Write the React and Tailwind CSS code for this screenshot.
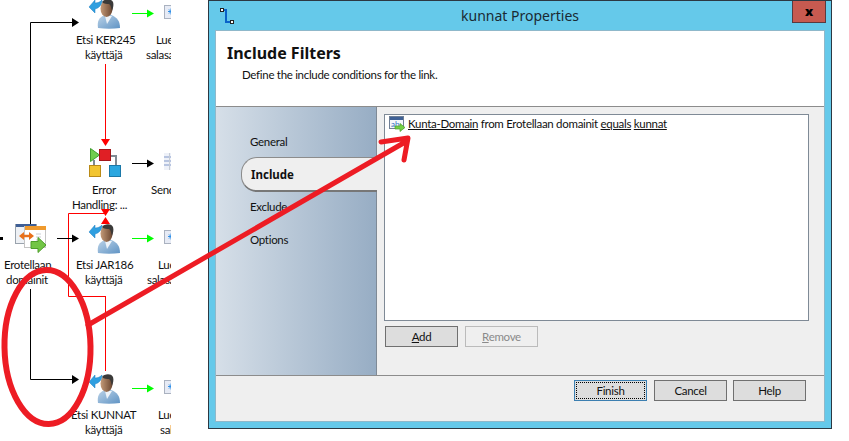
import React from "react";

// free canvas labels on the left (x, y = top of the line)
const labels = [
  { x: 76, y: 32, text: "Etsi KER245" },
  { x: 85, y: 47, text: "käyttäjä" },
  { x: 156, y: 32, text: "Lue" },
  { x: 146, y: 47, text: "salasana" },
  { x: 92, y: 182, text: "Error" },
  { x: 72, y: 197, text: "Handling: ..." },
  { x: 151, y: 182, text: "Send" },
  { x: 4, y: 257, text: "Erotellaan" },
  { x: 6, y: 272, text: "domainit" },
  { x: 76, y: 257, text: "Etsi JAR186" },
  { x: 85, y: 272, text: "käyttäjä" },
  { x: 158, y: 257, text: "Lue" },
  { x: 147, y: 272, text: "salasana" },
  { x: 71, y: 407, text: "Etsi KUNNAT" },
  { x: 85, y: 422, text: "käyttäjä" },
  { x: 158, y: 407, text: "Lue" },
  { x: 160, y: 422, text: "salasana" },
];

function Person({ x, y, id }) {
  return (
    <g transform={`translate(${x} ${y})`}>
      <defs>
        <linearGradient id={`skin${id}`} x1="0" y1="0" x2="1" y2="0">
          <stop offset="0" stopColor="#c49a78" />
          <stop offset="1" stopColor="#6b4630" />
        </linearGradient>
        <linearGradient id={`coat${id}`} x1="0" y1="0" x2="1" y2="1">
          <stop offset="0" stopColor="#bcd3e8" />
          <stop offset="1" stopColor="#5f93c4" />
        </linearGradient>
      </defs>
      <path d="M10 31c-1-7 1-11 7-13h6c6 2 9 6 9 13-7 1-15 1-22 0z" fill={`url(#coat${id})`} />
      <path d="M17 19l2 8 5-8z" fill="#eef3f8" />
      <ellipse cx="18.500" cy="11.500" rx="6" ry="8.500" fill={`url(#skin${id})`} />
      <path d="M14 5c2-3 9-4 11 0 1 3 0 6-1 9-1-3-1-6-3-7-2 0-5 0-7-2z" fill="#3b3a39" />
      <path d="M1 10l6-7v3c3 0 5-1 7-3 0 5-3 8-7 9v4z" fill="#2f9fe0" stroke="#1f7fc0" strokeWidth="0.500" />
    </g>
  );
}

function ErrorIcon() {
  return (
    <g>
      <path d="M110 156h6v10" fill="none" stroke="#7f8a93" strokeWidth="2" />
      <path d="M94 160v6" stroke="#7f8a93" strokeWidth="2" />
      <path d="M90.500 148.500v13l9-6.500z" fill="#6fce4e" stroke="#3f9f2f" />
      <rect x="99.500" y="149.500" width="11" height="11" fill="#e01f25" stroke="#a31519" />
      <rect x="89.500" y="165.500" width="11" height="11" fill="#f2c530" stroke="#b98a17" />
      <rect x="109.500" y="165.500" width="11" height="11" fill="#2ba7e0" stroke="#1b78a8" />
    </g>
  );
}

function DomainIcon() {
  return (
    <g>
      <rect x="15.500" y="224.500" width="21" height="19" fill="#eef1f5" stroke="#9aa3ad" />
      <rect x="16" y="224" width="20" height="3" fill="#3f5f96" />
      <rect x="24.500" y="226.500" width="21" height="21" fill="#fff" stroke="#c4c4c4" />
      <rect x="25" y="226" width="21" height="4" fill="#ef9a2e" />
      <path d="M36 234h5M36 237h5M36 240h5" stroke="#c9ccd2" />
      <path d="M21 236h11" stroke="#e8701a" strokeWidth="2.500" />
      <path d="M19 236l5-4v8zM34 236l-5-4v8z" fill="#e8701a" />
      <path d="M31 241.500h7v-4l8 7.500-8 7.500v-4h-7z" fill="#72c545" stroke="#4e9e2b" />
    </g>
  );
}

function ClippedDoc({ x, y }) {
  return (
    <g>
      <rect x={x + 0.5} y={y + 0.5} width="10" height="13" fill="#e7ebf5" stroke="#aab2c0" />
      <path
        d={`M${x + 4} ${y + 6.5}h6M${x + 7} ${y + 3.5}v6M${x + 5} ${y + 4.5}l4 4M${x + 9} ${y + 4.5}l-4 4`}
        stroke="#2f8fe8"
      />
    </g>
  );
}

function ClippedStack() {
  return (
    <g>
      <rect x="164" y="153" width="8" height="17" fill="#eef1f8" />
      <path d="M164 157h7M164 161h7M164 165h7" stroke="#b7c4e0" strokeWidth="2" />
      <path d="M169.500 153v17" stroke="#c6ccd6" />
    </g>
  );
}

function Arrow({ x1, x2, y, color }) {
  return (
    <g>
      <path d={`M${x1} ${y + 0.5}H${x2 - 6}`} stroke={color} />
      <path d={`M${x2 - 7} ${y - 3.500}l7 4-7 4z`} fill={color} />
    </g>
  );
}

function Diagram() {
  return (
    <svg className="absolute inset-0" width="171" height="441">
      <path d="M30.500 225V22.500H72" fill="none" stroke="#000" />
      <path d="M72 18l7 4.500-7 4.500z" fill="#000" />
      <path d="M30.500 289V379.500H72" fill="none" stroke="#000" />
      <path d="M72 375l7 4.500-7 4.500z" fill="#000" />
      <path d="M0 238.500h3" stroke="#000" strokeWidth="3" />
      <path d="M105.500 64V140" stroke="#f00" />
      <path d="M101 139h9l-4.500 7z" fill="#f00" />
      <path d="M105.500 296.500H68.500V213.500H105.500" fill="none" stroke="#f00" />
      <path d="M105.500 296V371" stroke="#f00" />
      <path d="M101 209h9l-4.500 7zM101 224h9l-4.500-7z" fill="#f00" />
      <Arrow x1={132} x2={154} y={13} color="#00ff00" />
      <Arrow x1={132} x2={154} y={163} color="#000" />
      <Arrow x1={57} x2={79} y={238} color="#000" />
      <Arrow x1={132} x2={154} y={238} color="#00ff00" />
      <Arrow x1={132} x2={154} y={388} color="#00ff00" />
      <Person x={88} y={-3} id="a" />
      <Person x={88} y={222} id="b" />
      <Person x={88} y={372} id="c" />
      <ErrorIcon />
      <DomainIcon />
      <ClippedDoc x={164} y={5} />
      <ClippedStack />
      <ClippedDoc x={164} y={230} />
      <ClippedDoc x={164} y={380} />
    </svg>
  );
}

function Annotations() {
  return (
    <svg className="absolute inset-0 pointer-events-none" width="849" height="441">
      <ellipse cx="47.500" cy="347" rx="43" ry="77" fill="none" stroke="#ed1c24" strokeWidth="6" transform="rotate(-1 47 347)" />
      <path d="M88 325L407 141M381 142L408 138L404 160" fill="none" stroke="#ed1c24" strokeWidth="5" strokeLinecap="round" strokeLinejoin="round" />
    </svg>
  );
}

function Button({ accel, rest, className = "" }) {
  return (
    <button className={`w-[73px] h-[21px] pt-px border text-[11.500px] tracking-[-0.300px] leading-none ${className}`}>
      {accel && <span className="underline">{accel}</span>}
      {rest}
    </button>
  );
}

function ListIcon() {
  return (
    <svg width="17" height="16" className="shrink-0">
      <rect x="0.500" y="0.500" width="14" height="12" fill="#f4f7fb" stroke="#6f7f95" />
      <rect x="1" y="1" width="13" height="3" fill="#3f6196" />
      <text x="2" y="11" fontSize="8" fontFamily="Lato" fill="#2f6fc0">ab</text>
      <path d="M6 10h5V7.500l5 4-5 4V13H6z" fill="#72d045" stroke="#4e9e2b" strokeWidth="0.700" />
    </svg>
  );
}

function PropertiesWindow() {
  return (
    <div className="absolute left-[208px] top-0 w-[624px] h-[429px] border border-[#2c3842] bg-[#65c9ea] flex flex-col">
      {/* title bar */}
      <div className="relative h-[30px] shrink-0 flex items-center justify-center">
        <svg className="absolute left-[10px] top-[6px]" width="16" height="18">
          <path d="M4 3h3v12h5" fill="none" stroke="#0a63c9" strokeWidth="2" />
          <rect x="1.500" y="1.500" width="3" height="3" fill="#fff" stroke="#222" />
          <rect x="11.500" y="13.500" width="3" height="3" fill="#fff" stroke="#222" />
        </svg>
        <span className="font-['Noto_Sans',sans-serif] text-sm tracking-normal text-[#1a2a33]">kunnat Properties</span>
        <div className="absolute left-[583px] top-0 w-[34px] h-[22px] bg-[#c75a50] border border-[#5a3a3f] border-t-0 flex items-center justify-center">
          <span className="font-['Noto_Sans',sans-serif] text-[13px] font-black leading-none text-black">x</span>
        </div>
      </div>

      {/* client area */}
      <div className="mx-[7px] flex-1 flex flex-col bg-[#efefef] min-h-0 shadow-[0_0_0_1px_#8fb8ca]">
        <div className="h-[75px] shrink-0 bg-white pt-[11px] pl-[11px] border-b-2 border-b-[#fff]">
          <h1 className="font-['Noto_Sans',sans-serif] text-base font-bold leading-[22px] text-[#111]">Include Filters</h1>
          <p className="text-[11.500px] tracking-[-0.300px] leading-4 mt-[3px] ml-[15px] text-[#111]">Define the include conditions for the link.</p>
        </div>
        <div className="h-[1px] bg-[#8c8c8c] shrink-0" />
        <div className="h-[269px] shrink-0 flex border-b border-b-[#8c8c8c]">
          <nav className="w-[161px] shrink-0 pt-[18px] border-r border-r-[#7f8a96] bg-gradient-to-r from-[#d6dfe8] to-[#97adc4] text-[11.500px] tracking-[-0.300px] text-[#111]">
            <div className="h-[32px] pt-px pl-[34px] flex items-center">General</div>
            <div className="ml-[25px] h-[35px] pt-px -mr-px pl-[9px] flex items-center font-['Noto_Sans',sans-serif] tracking-normal font-bold bg-[#efefef] border border-[#8c8c8c] border-r-0 border-b-2 border-b-[#777] rounded-l-[16px]">
              Include
            </div>
            <div className="h-[30px] pl-[34px] flex items-center">Exclude</div>
            <div className="h-[30px] mt-[3px] pl-[34px] flex items-center">Options</div>
          </nav>
          <div className="flex-1 pt-[7px] pl-[7px]">
            <div className="w-[425px] h-[207px] bg-white border border-[#7f8a96] pl-[4px] pt-[1px] flex items-start gap-[2px]">
              <ListIcon />
              <div className="text-[11.500px] tracking-[-0.300px] leading-4 whitespace-nowrap text-[#111]">
                <span className="underline">Kunta-Domain</span> from Erotellaan domainit <span className="underline">equals</span> <span className="underline">kunnat</span>
              </div>
            </div>
            <div className="flex gap-[7px] mt-[5px] ml-px">
              <Button accel="A" rest="dd" className="bg-[#dddddd] border-[#707070] text-[#111]" />
              <Button accel="R" rest="emove" className="bg-[#efefef] border-[#bbbbbb] text-[#8a8a8a]" />
            </div>
          </div>
        </div>
        <div className="flex-1 flex justify-end items-start pt-[4px] pr-[18px]">
          <div className="w-[73px] h-[21px] border border-[#3c7fb1] bg-[#dddddd] p-px">
            <div className="w-full h-full pt-px border border-dotted border-black flex items-center justify-center text-[11.500px] tracking-[-0.300px] text-[#111]">Finish</div>
          </div>
          <Button rest="Cancel" className="ml-[7px] bg-[#dddddd] border-[#707070] text-[#111]" />
          <Button rest="Help" className="ml-[6px] bg-[#dddddd] border-[#707070] text-[#111]" />
        </div>
      </div>
      <div className="h-[7px] shrink-0" />
    </div>
  );
}

export default function App() {
  return (
    <div className="relative w-[849px] h-[441px] bg-white overflow-hidden font-['Lato',sans-serif]">
      <div className="absolute left-0 top-0 w-[171px] h-[441px] overflow-hidden">
        <Diagram />
        {labels.map((l) => (
          <div
            key={l.text + l.x + l.y}
            className="absolute text-[11.500px] tracking-[-0.300px] leading-4 whitespace-nowrap text-[#111]"
            style={{ left: l.x, top: l.y }}
          >
            {l.text}
          </div>
        ))}
      </div>
      <PropertiesWindow />
      <Annotations />
    </div>
  );
}
